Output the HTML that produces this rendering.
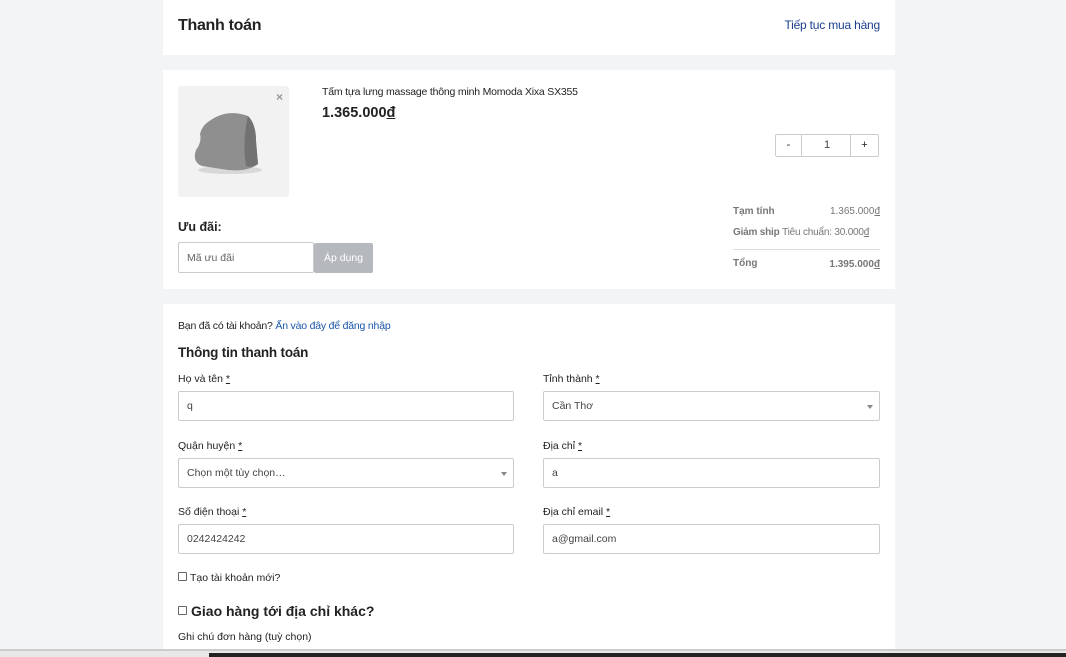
<!DOCTYPE html>
<html><head><meta charset="utf-8"><style>
*{box-sizing:border-box;margin:0;padding:0}
body{width:1066px;height:657px;background:#f3f4f6;font-family:"Liberation Sans",Arial,sans-serif;color:#222;position:relative;overflow:hidden}
.a{position:absolute}
.card{position:absolute;left:163px;width:732px;background:#fff}
.inp{position:absolute;border:1px solid #ccc;border-radius:2px;background:#fff;font-size:10.5px;color:#444;padding-left:8px;display:flex;align-items:center}
.lbl{position:absolute;font-size:10.5px;color:#222}
.lbl u{text-decoration:underline}
.caret{position:absolute;right:6px;top:13px;border:3px solid transparent;border-top:4px solid #888}
.gr{color:#777;font-size:10px}
</style></head><body>
<div class="card" style="top:0;height:55px">
 <div class="a" style="left:15px;top:17px;font-size:16px;font-weight:600;letter-spacing:-0.3px">Thanh toán</div>
 <div class="a" style="right:15px;top:18px;font-size:12px;color:#1a3e8c;letter-spacing:-0.2px">Tiếp tục mua hàng</div>
</div>
<div class="card" style="top:70px;height:219px">
 <div class="a" style="left:15px;top:16px;width:111px;height:111px;background:#f2f2f2;border-radius:3px">
  <svg width="111" height="111" viewBox="0 0 111 111"><ellipse cx="52" cy="84" rx="32" ry="4" fill="#d8d8d8"/><path d="M30 36 Q48 22 70 30 Q78 38 78 55 L80 78 Q70 86 50 84 L24 80 Q14 76 18 64 Q24 56 22 48 Q24 40 30 36Z" fill="#8f8f8f"/><path d="M70 30 Q78 38 78 55 L80 78 Q74 82 68 80 Q64 55 70 30Z" fill="#727272"/></svg>
  <div class="a" style="right:6px;top:4px;color:#999;font-size:12px;font-weight:bold">×</div>
 </div>
 <div class="a" style="left:159px;top:16px;font-size:10.5px;letter-spacing:-0.2px">Tấm tựa lưng massage thông minh Momoda Xixa SX355</div>
 <div class="a" style="left:159px;top:35px;font-size:14.5px;font-weight:bold">1.365.000<u>đ</u></div>
 <div class="a" style="left:612px;top:64px;width:104px;height:23px;border:1px solid #ccc;border-radius:2px;font-size:11px">
  <div class="a" style="left:0;top:0;width:26px;height:21px;border-right:1px solid #ccc;text-align:center;line-height:21px">-</div>
  <div class="a" style="left:26px;top:0;width:50px;height:21px;text-align:center;line-height:21px;color:#444">1</div>
  <div class="a" style="right:0;top:0;width:28px;height:21px;border-left:1px solid #ccc;text-align:center;line-height:21px">+</div>
 </div>
 <div class="a" style="left:15px;top:150px;font-size:12.5px;font-weight:bold">Ưu đãi:</div>
 <div class="inp" style="left:15px;top:172px;width:136px;height:31px;color:#666">Mã ưu đãi</div>
 <div class="a" style="left:151px;top:173px;width:59px;height:30px;background:#b5b8bd;border-radius:2px;color:#fff;font-size:10.5px;text-align:center;line-height:30px">Áp dụng</div>
 <div class="a gr" style="left:570px;top:136px;font-weight:bold">Tạm tính</div>
 <div class="a gr" style="right:15px;top:136px">1.365.000<u>đ</u></div>
 <div class="a gr" style="left:570px;top:157px;font-weight:bold;letter-spacing:-0.2px">Giảm ship <span style="font-weight:normal">Tiêu chuẩn: 30.000<u>đ</u></span></div>
 <div class="a" style="left:570px;top:179px;width:147px;height:1px;background:#ddd"></div>
 <div class="a gr" style="left:570px;top:188px;font-weight:bold">Tổng</div>
 <div class="a gr" style="right:15px;top:189px;font-weight:bold">1.395.000<u>đ</u></div>
</div>
<div class="card" style="top:304px;height:346px">
 <div class="a" style="left:15px;top:16px;font-size:10.5px;letter-spacing:-0.2px">Bạn đã có tài khoản? <span style="color:#1a55a8">Ấn vào đây để đăng nhập</span></div>
 <div class="a" style="left:15px;top:41px;font-size:13.5px;font-weight:600;color:#222;letter-spacing:-0.2px">Thông tin thanh toán</div>
 <div class="lbl" style="left:15px;top:69px">Họ và tên <u>*</u></div>
 <div class="inp" style="left:15px;top:87px;width:336px;height:30px">q</div>
 <div class="lbl" style="left:380px;top:69px">Tỉnh thành <u>*</u></div>
 <div class="inp" style="left:380px;top:87px;width:337px;height:30px">Cần Thơ<div class="caret"></div></div>
 <div class="lbl" style="left:15px;top:136px">Quận huyện <u>*</u></div>
 <div class="inp" style="left:15px;top:154px;width:336px;height:30px">Chọn một tùy chọn…<div class="caret"></div></div>
 <div class="lbl" style="left:380px;top:136px">Địa chỉ <u>*</u></div>
 <div class="inp" style="left:380px;top:154px;width:337px;height:30px">a</div>
 <div class="lbl" style="left:15px;top:202px">Số điện thoại <u>*</u></div>
 <div class="inp" style="left:15px;top:220px;width:336px;height:30px">0242424242</div>
 <div class="lbl" style="left:380px;top:202px">Địa chỉ email <u>*</u></div>
 <div class="inp" style="left:380px;top:220px;width:337px;height:30px">a@gmail.com</div>
 <div class="a" style="left:15px;top:268px;width:9px;height:9px;border:1px solid #666;border-radius:1px"></div>
 <div class="lbl" style="left:27px;top:268px">Tạo tài khoản mới?</div>
 <div class="a" style="left:15px;top:302px;width:9px;height:9px;border:1px solid #666;border-radius:1px"></div>
 <div class="a" style="left:28px;top:299px;font-size:14px;font-weight:600">Giao hàng tới địa chỉ khác?</div>
 <div class="lbl" style="left:15px;top:327px">Ghi chú đơn hàng (tuỳ chọn)</div>
</div>
<div class="a" style="left:0;top:649px;width:1066px;height:2px;background:#ccc"></div>
<div class="a" style="left:0;top:651px;width:1066px;height:6px;background:#e8e8e8"></div>
<div class="a" style="left:209px;top:653px;width:857px;height:4px;background:#222"></div>
</body></html>
